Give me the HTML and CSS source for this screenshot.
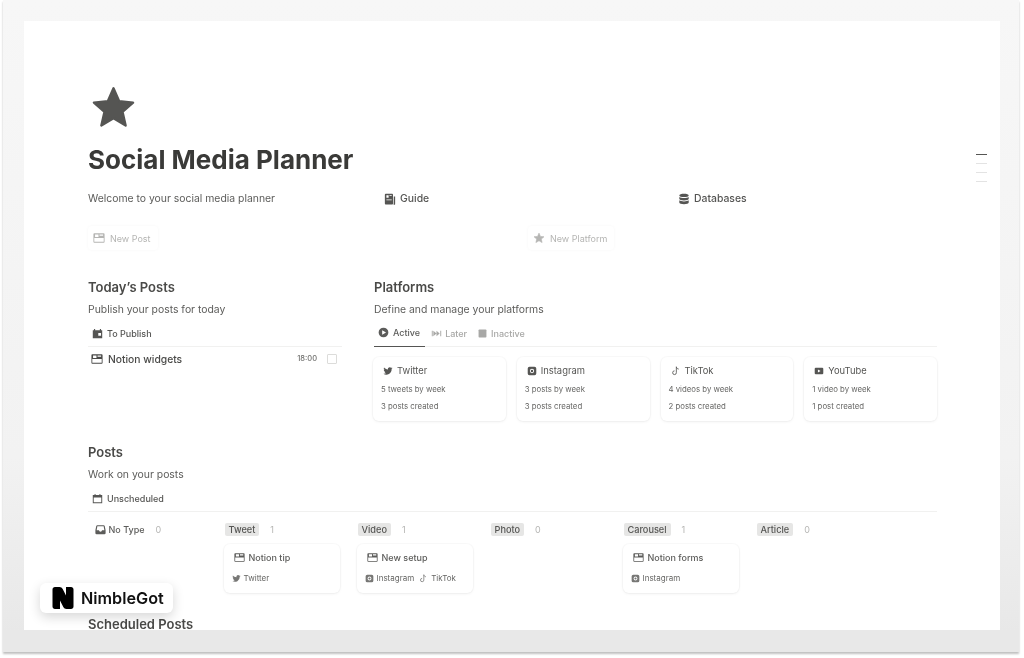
FILE: index.html
```html
<!DOCTYPE html>
<html lang="en">
<head>
  <meta charset="UTF-8">
  <title>Social Media Planner</title>
  <link rel="stylesheet" href="styles.css">
</head>
<body>

  <svg class="sprites" width="0" height="0">
    <symbol id="i-post" viewBox="0 0 14 14"><path fill="currentColor" fill-rule="evenodd" d="M1.5 1.5h11a1 1 0 0 1 1 1v9a1 1 0 0 1-1 1h-11a1 1 0 0 1-1-1v-9a1 1 0 0 1 1-1zm0 5.5v4.2a.3.3 0 0 0 .3.3h10.400a.3.3 0 0 0 .3-.3V7zm.9-4.200v3h4v-3zm5.200 0v1.600h4.200V2.800z"/></symbol>
    <symbol id="i-star" viewBox="0 0 24 24"><path fill="currentColor" stroke="currentColor" stroke-width="1.200" stroke-linejoin="round" d="M12 2.200l2.900 6.600 7.100.7-5.400 4.700 1.600 7-6.200-3.700-6.200 3.700 1.600-7L2 9.500l7.100-.7z"/></symbol>
    <symbol id="i-guide" viewBox="0 0 14 14"><path fill="currentColor" fill-rule="evenodd" d="M2 1h7.500a1 1 0 0 1 1 1v10.500a.8.8 0 0 1-.8.8H2a1 1 0 0 1-1-1V2a1 1 0 0 1 1-1zm.8 1.600v3h2.600v-3zm3.600 0v1h2.600v-1zm-3.600 5v1h6.200v-1zM11.400 4H13v9a1 1 0 0 1-1 .6h-.8z"/></symbol>
    <symbol id="i-db" viewBox="0 0 14 14"><path fill="currentColor" d="M7 .8c3 0 5.500.8 5.500 2S10 4.800 7 4.800 1.500 4 1.500 2.800 4 .8 7 .8zM1.500 4.600C2.600 5.500 4.700 5.900 7 5.900s4.400-.4 5.500-1.300v2.200c0 1.200-2.500 2-5.500 2s-5.500-.8-5.500-2zm0 4C2.600 9.500 4.700 9.900 7 9.900s4.400-.4 5.500-1.300v2.600c0 1.200-2.500 2-5.500 2s-5.500-.8-5.500-2z"/></symbol>
    <symbol id="i-publish" viewBox="0 0 14 14"><path fill="currentColor" fill-rule="evenodd" d="M1 3h1.500V1.300H4V3h6V1.300h1.500V3H13v10H1zm7 3.500v3.500h3.500V6.500z"/></symbol>
    <symbol id="i-play" viewBox="0 0 14 14"><path fill="currentColor" fill-rule="evenodd" d="M7 .8a6.200 6.200 0 1 1 0 12.400A6.200 6.200 0 0 1 7 .8zM5.300 4v6L10.200 7z"/></symbol>
    <symbol id="i-later" viewBox="0 0 14 14"><path fill="currentColor" d="M1 3.500h1.200v7H1zM3 3.500L7 7l-4 3.500zM7 3.500L11 7l-4 3.500zM11.800 3.500H13v7h-1.200z"/></symbol>
    <symbol id="i-stop" viewBox="0 0 14 14"><rect fill="currentColor" x="2" y="2" width="10" height="10" rx="1"/></symbol>
    <symbol id="i-twitter" viewBox="0 0 24 24"><path fill="currentColor" d="M23 5.100c-.8.400-1.700.6-2.600.7.900-.6 1.600-1.400 2-2.500-.9.500-1.800.9-2.900 1.100A4.500 4.500 0 0 0 11.800 8.500C8 8.300 4.700 6.500 2.500 3.800c-1.200 2.100-.6 4.700 1.400 6-.7 0-1.400-.2-2-.6 0 2.200 1.500 4.100 3.600 4.500-.7.200-1.400.2-2 .1.600 1.800 2.300 3.100 4.200 3.100A9 9 0 0 1 1 18.800 12.800 12.800 0 0 0 20.700 7.400c.9-.6 1.700-1.400 2.300-2.300z"/></symbol>
    <symbol id="i-instagram" viewBox="0 0 14 14"><path fill="currentColor" fill-rule="evenodd" d="M3.500 1h7A2.500 2.500 0 0 1 13 3.500v7a2.500 2.500 0 0 1-2.500 2.500h-7A2.500 2.500 0 0 1 1 10.500v-7A2.500 2.500 0 0 1 3.500 1zM7 4a3 3 0 1 0 0 6 3 3 0 0 0 0-6zm0 1.300a1.700 1.700 0 1 1 0 3.400 1.700 1.700 0 0 1 0-3.400z"/></symbol>
    <symbol id="i-tiktok" viewBox="0 0 14 14"><path fill="none" stroke="currentColor" stroke-width="1.200" d="M7.500 1v8.400a2.600 2.600 0 1 1-2.600-2.600M7.500 1.200c.3 1.800 1.500 2.900 3.300 3.100"/></symbol>
    <symbol id="i-youtube" viewBox="0 0 14 14"><path fill="currentColor" fill-rule="evenodd" d="M2.500 2.500h9A1.500 1.500 0 0 1 13 4v6a1.500 1.500 0 0 1-1.500 1.500h-9A1.500 1.500 0 0 1 1 10V4a1.500 1.500 0 0 1 1.500-1.500zM5.500 5v4L9.200 7z"/></symbol>
    <symbol id="i-calendar" viewBox="0 0 14 14"><path fill="currentColor" fill-rule="evenodd" d="M1 2.500h2.300V1.200h1.200v1.300h5V1.200h1.200v1.300H13V13H1zm1.200 3.300v6h9.600v-6z"/></symbol>
    <symbol id="i-inbox" viewBox="0 0 14 14"><path fill="currentColor" fill-rule="evenodd" d="M3 1.500h8a1.500 1.500 0 0 1 1.400 1L13.500 8v3.500a1.500 1.500 0 0 1-1.500 1.500H2a1.500 1.500 0 0 1-1.500-1.500V8l1.100-5.500a1.500 1.500 0 0 1 1.400-1zm0 1.300L2.100 8h3a1.900 1.900 0 0 0 3.800 0h3L11 2.800z"/></symbol>
  </svg>

  <div class="frame">
    <main class="page">
      <svg class="page-icon"><use href="#i-star"/></svg>
      <h1 class="title">Social Media Planner</h1>

      <div class="intro">
        <p class="desc">Welcome to your social media planner</p>
        <a class="page-link"><svg class="ico"><use href="#i-guide"/></svg>Guide</a>
        <a class="page-link"><svg class="ico"><use href="#i-db"/></svg>Databases</a>
      </div>

      <div class="actions">
        <div><button class="ghost-btn"><svg class="ico"><use href="#i-post"/></svg>New Post</button></div>
        <div><button class="ghost-btn"><svg class="ico"><use href="#i-star"/></svg>New Platform</button></div>
      </div>

      <div class="columns">
        <section>
          <h2>Today’s Posts</h2>
          <p class="desc">Publish your posts for today</p>
          <div class="tabs">
            <span class="tab strong"><svg class="ico-sm"><use href="#i-publish"/></svg>To Publish</span>
          </div>
          <div class="today-row">
            <svg class="ico"><use href="#i-post"/></svg>
            <span class="today-name">Notion widgets</span>
            <span class="today-time">18:00</span>
            <span class="checkbox"></span>
          </div>
        </section>

        <section>
          <h2>Platforms</h2>
          <p class="desc">Define and manage your platforms</p>
          <div class="tabs">
            <span class="tab active"><svg class="ico-sm"><use href="#i-play"/></svg>Active</span>
            <span class="tab muted"><svg class="ico-sm"><use href="#i-later"/></svg>Later</span>
            <span class="tab muted"><svg class="ico-sm"><use href="#i-stop"/></svg>Inactive</span>
          </div>
          <div class="platforms">
            <div class="card platform">
              <div class="platform-name"><svg class="ico-sm"><use href="#i-twitter"/></svg>Twitter</div>
              <p>5 tweets by week</p>
              <p>3 posts created</p>
            </div>
            <div class="card platform">
              <div class="platform-name"><svg class="ico-sm"><use href="#i-instagram"/></svg>Instagram</div>
              <p>3 posts by week</p>
              <p>3 posts created</p>
            </div>
            <div class="card platform">
              <div class="platform-name"><svg class="ico-sm"><use href="#i-tiktok"/></svg>TikTok</div>
              <p>4 videos by week</p>
              <p>2 posts created</p>
            </div>
            <div class="card platform">
              <div class="platform-name"><svg class="ico-sm"><use href="#i-youtube"/></svg>YouTube</div>
              <p>1 video by week</p>
              <p>1 post created</p>
            </div>
          </div>
        </section>
      </div>

      <section class="posts">
        <h2>Posts</h2>
        <p class="desc">Work on your posts</p>
        <div class="tabs">
          <span class="tab strong"><svg class="ico-sm"><use href="#i-calendar"/></svg>Unscheduled</span>
        </div>
        <div class="board">
          <div class="board-col">
            <div class="board-head"><span class="no-type"><svg class="ico-sm"><use href="#i-inbox"/></svg>No Type</span><span class="count">0</span></div>
          </div>
          <div class="board-col">
            <div class="board-head"><span class="tag">Tweet</span><span class="count">1</span></div>
            <div class="card post">
              <div class="post-name"><svg class="ico-sm"><use href="#i-post"/></svg>Notion tip</div>
              <div class="post-meta"><span><svg class="ico-xs"><use href="#i-twitter"/></svg>Twitter</span></div>
            </div>
          </div>
          <div class="board-col">
            <div class="board-head"><span class="tag">Video</span><span class="count">1</span></div>
            <div class="card post">
              <div class="post-name"><svg class="ico-sm"><use href="#i-post"/></svg>New setup</div>
              <div class="post-meta">
                <span><svg class="ico-xs"><use href="#i-instagram"/></svg>Instagram</span>
                <span><svg class="ico-xs"><use href="#i-tiktok"/></svg>TikTok</span>
              </div>
            </div>
          </div>
          <div class="board-col">
            <div class="board-head"><span class="tag">Photo</span><span class="count">0</span></div>
          </div>
          <div class="board-col">
            <div class="board-head"><span class="tag">Carousel</span><span class="count">1</span></div>
            <div class="card post">
              <div class="post-name"><svg class="ico-sm"><use href="#i-post"/></svg>Notion forms</div>
              <div class="post-meta"><span><svg class="ico-xs"><use href="#i-instagram"/></svg>Instagram</span></div>
            </div>
          </div>
          <div class="board-col">
            <div class="board-head"><span class="tag">Article</span><span class="count">0</span></div>
          </div>
        </div>
      </section>

      <h2 class="scheduled">Scheduled Posts</h2>

      <div class="toc">
        <span class="on"></span>
        <span></span>
        <span></span>
        <span></span>
      </div>
    </main>

    <div class="brand">
      <svg class="brand-mark" viewBox="0 0 24 24"><path fill="#000" d="M4 1h4.500c1.500 0 2.500.7 3.200 2L15 9.500V1h5c1.500 0 2.500 1 2.500 2.500v17c0 1.500-1 2.500-2.500 2.500h-4.500c-1.500 0-2.500-.7-3.200-2L9 14.500V23H4c-1.500 0-2.500-1-2.500-2.500v-17C1.500 2 2.500 1 4 1z"/></svg>
      <span>NimbleGot</span>
    </div>
  </div>

</body>
</html>
```

FILE: styles.css
```css
* {
  margin: 0;
  padding: 0;
  box-sizing: border-box;
}

body {
  font-family: 'Inter', 'Liberation Sans', sans-serif;
  background: #fff;
  color: #4a4a48;
  height: 658px;
  overflow: hidden;
}

.sprites {
  display: block;
  height: 0;
}

.frame {
  position: relative;
  margin-left: 3px;
  width: 1016px;
  height: 652px;
  padding: 21px 19px 22px 21px;
  background: linear-gradient(#f7f7f7, #f2f2f2 70%, #e8e8e8 97%);
  box-shadow: 0 2px 2px rgba(0, 0, 0, 0.25);
  filter: blur(0.4px);
}

.page {
  position: relative;
  height: 609px;
  padding: 63px 63px 0 64px;
  background: #fff;
  overflow: hidden;
}

.page-icon {
  display: block;
  width: 47px;
  height: 47px;
  margin-left: 2px;
  color: #555553;
}

.title {
  font-size: 26px;
  line-height: 34px;
  font-weight: 700;
  color: #3a3a38;
  margin-top: 12px;
}

h2 {
  font-size: 13px;
  line-height: 20px;
  font-weight: 600;
  color: #4a4a48;
}

.desc {
  font-size: 10.400px;
  line-height: 20px;
  color: #5c5c5a;
  margin-top: 3px;
}

.intro {
  display: grid;
  grid-template-columns: 296px 294px 1fr;
  align-items: center;
  margin-top: 11px;
}

.intro .desc {
  margin-top: 1px;
}

.page-link {
  display: flex;
  align-items: center;
  gap: 4px;
  font-size: 10.400px;
  font-weight: 500;
  color: #555553;
}

.ico {
  width: 12px;
  height: 12px;
  flex: none;
}

.ico-sm {
  width: 11px;
  height: 11px;
  flex: none;
}

.ico-xs {
  width: 9px;
  height: 9px;
  flex: none;
}

.actions {
  display: grid;
  grid-template-columns: 440px 1fr;
  margin-top: 17px;
}

.ghost-btn {
  display: inline-flex;
  align-items: center;
  gap: 5px;
  height: 24px;
  padding: 0 7px 0 5px;
  font-family: inherit;
  font-size: 9px;
  color: #b5b5b3;
  background: #fff;
  border: none;
  border-radius: 4px;
  box-shadow: 0 0 3px rgba(0, 0, 0, 0.04);
}

.columns {
  display: grid;
  grid-template-columns: 254px 563px;
  gap: 32px;
  margin-top: 27px;
}

.tabs {
  display: flex;
  align-items: center;
  gap: 10px;
  height: 27px;
  padding-left: 4px;
  border-bottom: 1px solid #f1f1f0;
}

.tab {
  display: flex;
  align-items: center;
  gap: 3px;
  height: 27px;
  font-size: 9px;
  font-weight: 500;
  color: #5c5c5a;
}

.tab.strong {
  gap: 4px;
  color: #555553;
}

.tab.active {
  gap: 4px;
  margin: 0 -4px 0 -4px;
  padding: 0 5px 0 4px;
  border-bottom: 1px solid #555553;
}

.tab.muted {
  color: #a8a8a6;
}

.today-row {
  display: flex;
  align-items: center;
  gap: 5px;
  height: 23px;
  padding: 0 5px 0 3px;
  font-size: 10.300px;
  font-weight: 500;
}

.today-name {
  flex: 1;
}

.today-time {
  font-size: 7.500px;
  color: #6f6f6d;
  margin-right: 5px;
}

.checkbox {
  width: 10px;
  height: 10px;
  border: 1px solid #dcdcda;
  border-radius: 1px;
}

.card {
  background: #fff;
  border-radius: 6px;
  box-shadow: 0 0 0 1px rgba(0, 0, 0, 0.02), 0 1px 3px rgba(0, 0, 0, 0.06);
}

.platforms {
  display: grid;
  grid-template-columns: repeat(4, 1fr);
  gap: 11px;
  margin: 10px 0 0 -1px;
}

.platform {
  height: 64px;
  padding: 6px 8px;
}

.platform p {
  font-size: 7.800px;
  line-height: 17px;
  color: #666664;
}

.platform-name {
  display: flex;
  align-items: center;
  gap: 4px;
  height: 15px;
  margin: 0 0 3px 2px;
  font-size: 9.400px;
  color: #555553;
}

.platform-name .ico-sm {
  width: 10px;
  height: 10px;
}

.posts {
  margin-top: 21px;
}

.board {
  display: grid;
  grid-template-columns: repeat(6, 116.500px);
  gap: 16.500px;
  margin-left: 3.500px;
  padding-top: 8px;
}

.board-head {
  display: flex;
  align-items: center;
  gap: 11px;
  height: 18px;
}

.no-type {
  display: flex;
  align-items: center;
  gap: 3px;
  padding-left: 3px;
  font-size: 9px;
  font-weight: 500;
  color: #5c5c5a;
}

.tag {
  padding: 0 4px;
  font-size: 9.200px;
  line-height: 13px;
  font-weight: 500;
  color: #555553;
  background: #e6e6e5;
  border-radius: 2px;
}

.count {
  font-size: 9px;
  color: #b5b5b3;
}

.post {
  height: 49px;
  margin: 6px 1px 0 -1px;
  padding: 6px 9px 6px 10px;
}

.post-name {
  display: flex;
  align-items: center;
  gap: 4px;
  height: 14px;
  font-size: 9px;
  font-weight: 500;
  color: #5c5c5a;
}

.post-meta {
  display: flex;
  gap: 5px;
  margin: 9px 0 0 -2px;
  font-size: 8px;
  color: #666664;
}

.post-meta span {
  display: flex;
  align-items: center;
  gap: 3px;
}

.post-meta .ico-xs {
  color: #777775;
}

.scheduled {
  margin-top: 25px;
  line-height: 12px;
}

.toc {
  position: absolute;
  top: 133px;
  right: 13px;
  display: flex;
  flex-direction: column;
  gap: 8px;
}

.toc span {
  display: block;
  width: 11px;
  height: 1px;
  background: #e3e3e3;
}

.toc .on {
  background: #555553;
}

.brand {
  position: absolute;
  left: 37px;
  top: 583px;
  display: flex;
  align-items: center;
  gap: 6px;
  width: 133px;
  height: 30px;
  padding-left: 11px;
  font-size: 16.200px;
  font-weight: 600;
  color: #111;
  background: #fff;
  border-radius: 6px;
  box-shadow: 0 4px 12px rgba(0, 0, 0, 0.16);
}

.brand-mark {
  width: 24px;
  height: 24px;
  flex: none;
}
```
